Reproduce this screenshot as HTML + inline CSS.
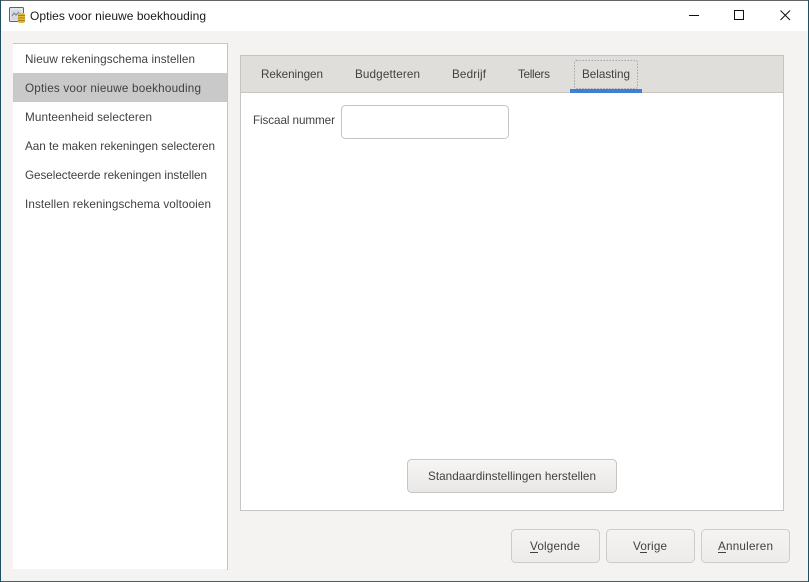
<!DOCTYPE html>
<html lang="nl">
<head>
<meta charset="utf-8">
<title>Opties voor nieuwe boekhouding</title>
<style>
html,body{margin:0;padding:0;background:#f4f3f2;}
body{width:809px;height:582px;overflow:hidden;}
svg{display:block;}
text{font-family:"Liberation Sans",sans-serif;font-size:11.7px;fill:#41413e;}
text.t{fill:#1a1a1a;font-size:12px;}
</style>
</head>
<body>
<svg width="809" height="582" viewBox="0 0 809 582" xmlns="http://www.w3.org/2000/svg">
<defs>
<linearGradient id="b" x1="0" y1="0" x2="0" y2="1">
<stop offset="0" stop-color="#f7f6f5"/><stop offset="1" stop-color="#e9e7e5"/>
</linearGradient>
<linearGradient id="b2" x1="0" y1="0" x2="0" y2="1">
<stop offset="0" stop-color="#f4f3f2"/><stop offset="1" stop-color="#eeecea"/>
</linearGradient>
</defs>
<rect width="809" height="582" fill="#f4f3f2"/>
<rect x="0" y="0" width="809" height="31" fill="#fff"/>
<!-- window border -->
<rect x="0" y="0" width="809" height="1" fill="#5f6364"/>
<rect x="0" y="581" width="809" height="1" fill="#555a5c"/>
<rect x="0" y="0" width="1" height="582" fill="#1f4f62"/>
<rect x="808" y="0" width="1" height="582" fill="#1f4f62"/>

<!-- app icon -->
<rect x="9.5" y="7.5" width="14" height="14" rx="1" fill="#e6e6e4" stroke="#606365"/>
<rect x="11" y="10" width="10" height="10" fill="#d3d9e4"/>
<path d="M12 16l2-3 2 2 3-3" fill="none" stroke="#6b7a95" stroke-width="1"/>
<rect x="18" y="13" width="7" height="10" rx="2" fill="#e2b93a"/>
<path d="M18 15.5h7M18 18h7M18 20.5h7" stroke="#8b6c10" stroke-width=".8"/>

<text class="t" x="30" y="20" textLength="176" lengthAdjust="spacing">Opties voor nieuwe boekhouding</text>

<!-- window controls -->
<rect x="689" y="15" width="10" height="1" fill="#111"/>
<rect x="734.5" y="10.5" width="9" height="9" fill="none" stroke="#111"/>
<path d="M780.5 10.5l9.5 9.5M790 10.5l-9.5 9.5" stroke="#111" stroke-width="1" fill="none"/>

<!-- left list -->
<rect x="13" y="44" width="214" height="525" fill="#fff"/>
<rect x="13" y="43" width="215" height="1" fill="#c9c8c5"/>
<rect x="227" y="43" width="1" height="527" fill="#c4c3c0"/>
<rect x="13" y="73" width="214" height="29" fill="#c9c9c9"/>
<text x="25" y="63" textLength="170" lengthAdjust="spacing">Nieuw rekeningschema instellen</text>
<text x="25" y="92" textLength="176" lengthAdjust="spacing">Opties voor nieuwe boekhouding</text>
<text x="25" y="121" textLength="127" lengthAdjust="spacing">Munteenheid selecteren</text>
<text x="25" y="150" textLength="190" lengthAdjust="spacing">Aan te maken rekeningen selecteren</text>
<text x="25" y="179" textLength="182" lengthAdjust="spacing">Geselecteerde rekeningen instellen</text>
<text x="25" y="208" textLength="186" lengthAdjust="spacing">Instellen rekeningschema voltooien</text>

<!-- tab panel -->
<rect x="240.5" y="55.5" width="543" height="455" fill="#fff" stroke="#c6c5c2"/>
<rect x="241" y="56" width="542" height="36" fill="#e0dedb"/>
<rect x="241" y="92" width="542" height="1" fill="#c6c5c2"/>
<rect x="574.5" y="60.5" width="63" height="28" rx="2" fill="none" stroke="#a5a5a3" stroke-width="1" stroke-dasharray="1.5 1.5"/>
<rect x="570" y="89" width="72" height="4" fill="#3f7fd6"/>
<text x="261" y="78" textLength="62" lengthAdjust="spacing">Rekeningen</text>
<text x="355" y="78" textLength="65" lengthAdjust="spacing">Budgetteren</text>
<text x="452" y="78" textLength="34" lengthAdjust="spacing">Bedrijf</text>
<text x="518" y="78" textLength="32" lengthAdjust="spacing">Tellers</text>
<text x="582" y="78" textLength="48" lengthAdjust="spacing">Belasting</text>

<text x="253" y="124" textLength="82" lengthAdjust="spacing">Fiscaal nummer</text>
<rect x="341.5" y="105.5" width="167" height="33" rx="4" fill="#fff" stroke="#c5c4c1"/>

<!-- buttons -->
<rect x="407.5" y="459.5" width="209" height="33" rx="4" fill="url(#b)" stroke="#c6c5c2"/>
<text x="428" y="480" textLength="168" lengthAdjust="spacing">Standaardinstellingen herstellen</text>

<rect x="511.5" y="529.5" width="88" height="33" rx="4" fill="url(#b2)" stroke="#cdccc9"/>
<text x="530" y="550" textLength="50" lengthAdjust="spacing">Volgende</text>
<rect x="530" y="552" width="8" height="1" fill="#41413e"/>

<rect x="606.5" y="529.5" width="88" height="33" rx="4" fill="url(#b2)" stroke="#cdccc9"/>
<text x="633" y="550" textLength="34" lengthAdjust="spacing">Vorige</text>
<rect x="640" y="552" width="7" height="1" fill="#41413e"/>

<rect x="701.5" y="529.5" width="88" height="33" rx="4" fill="url(#b2)" stroke="#cdccc9"/>
<text x="718" y="550" textLength="55" lengthAdjust="spacing">Annuleren</text>
<rect x="718" y="552" width="8" height="1" fill="#41413e"/>
</svg>
</body>
</html>
